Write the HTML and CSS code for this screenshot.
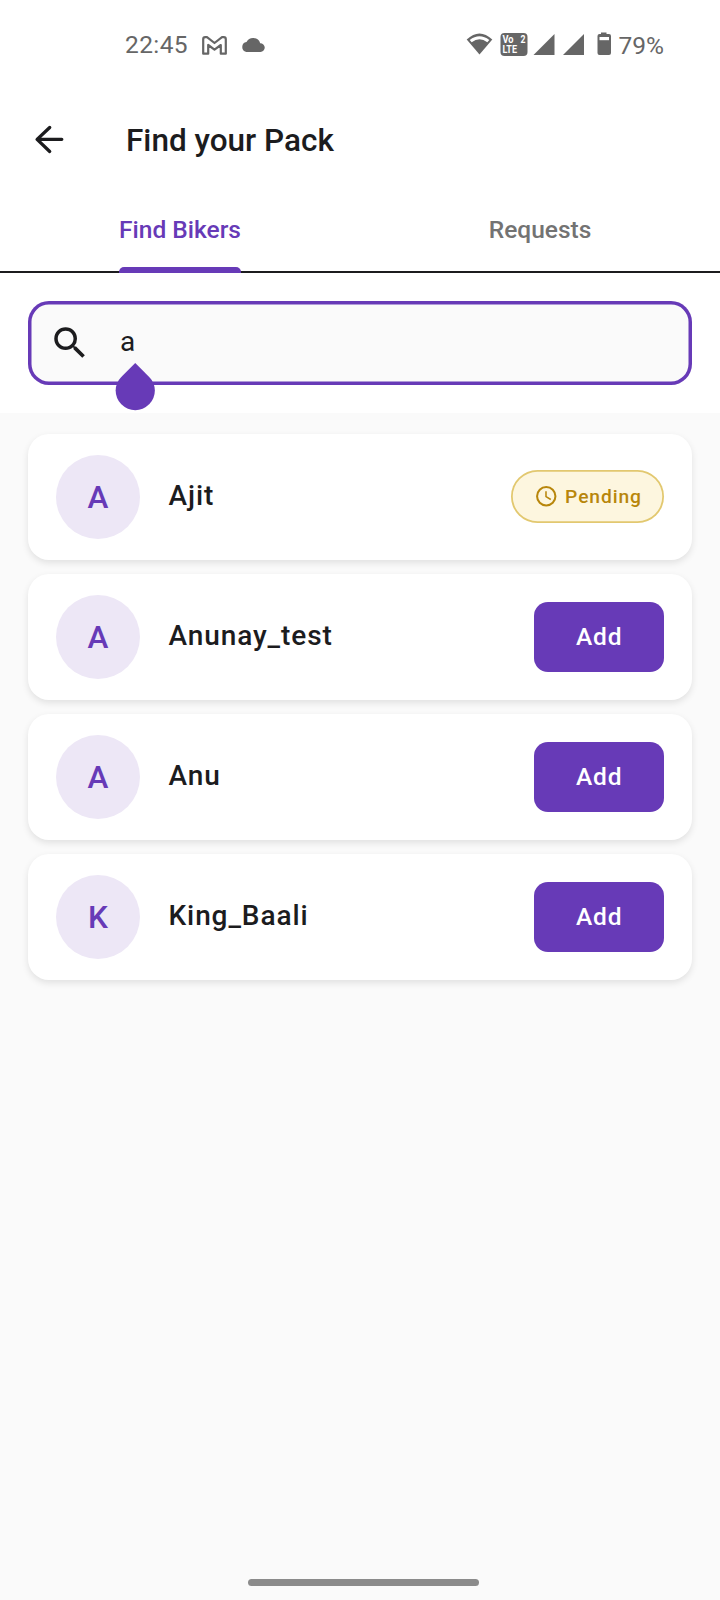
FILE: index.html
```html
<!DOCTYPE html>
<html lang="en">
<head>
<meta charset="utf-8">
<title>Find your Pack</title>
<link rel="stylesheet" href="styles.css">
</head>
<body>
<div class="screen">
  <div class="top">
    <div class="status">
      <span class="time">22:45</span>
      <svg class="gmail" width="25" height="19" viewBox="0 0 25 19"><path d="M1.200 3.200Q1.200 1.200 3.200 1.200H5L12.500 7 20 1.200h1.800Q23.800 1.200 23.800 3.200V17.700H18.800V9L12.500 13.700 6.200 9v8.700H1.200Z" fill="none" stroke="#666" stroke-width="2.200" stroke-linejoin="round"/></svg>
      <svg class="cloud" width="24" height="14" viewBox="0 0 24 14"><path d="M19.200 5.200A7.300 7.300 0 0 0 12 0 7.600 7.600 0 0 0 5.500 4 5.100 5.100 0 0 0 5.200 14H19.500a4.400 4.400 0 0 0-.3-8.800Z" fill="#666"/></svg>
      <span class="spacer"></span>
      <svg class="signals" width="150" height="26" viewBox="0 0 150 26">
        <path d="M.7 7.500Q13.500-4.500 26.300 7.500L13.500 22.500Z" fill="#666"/>
        <path d="M3.700 8Q13.500.5 23.300 8L21.300 10.300Q13.500 4.300 5.700 10.300Z" fill="#fff"/>
        <rect x="34.500" y="1" width="27" height="23" rx="4" fill="#666"/>
        <path d="M88.500 2v21H67.500ZM118 2v21H97Z" fill="#666"/>
        <path d="M135 .5h5.500V2H143q2 0 2 2v17q0 2-2 2h-9.500q-2 0-2-2V4q0-2 2-2H135Z" fill="#666"/>
        <rect x="133.500" y="5" width="9.500" height="3.200" fill="#fff"/>
        <g fill="#fff" font-family="Roboto, sans-serif" font-weight="700" font-size="10"><text x="36.500" y="11" textLength="11" lengthAdjust="spacingAndGlyphs">Vo</text><text x="54.500" y="11" textLength="5" lengthAdjust="spacingAndGlyphs">2</text><text x="36.500" y="21.300" textLength="14.500" lengthAdjust="spacingAndGlyphs">LTE</text></g>
      </svg>
      <span class="percent">79%</span>
    </div>
    <div class="appbar">
      <svg width="42" height="42" viewBox="0 0 24 24"><path d="M19.300 12.200H5.300M12.400 5.400 5.200 12.200l7.200 6.900" fill="none" stroke="#1c1c1e" stroke-width="1.900" stroke-linecap="round" stroke-linejoin="round"/></svg>
      <h1 class="title">Find your Pack</h1>
    </div>
    <div class="tabs">
      <div class="tab tab-active"><span class="tab-label">Find Bikers</span></div>
      <div class="tab"><span class="tab-label">Requests</span></div>
    </div>
    <div class="search">
      <svg width="42" height="42" viewBox="0 0 24 24"><path fill="#1c1c1e" d="M15.500 14h-.79l-.28-.27A6.471 6.471 0 0 0 16 9.500 6.500 6.500 0 1 0 9.500 16c1.610 0 3.090-.59 4.230-1.570l.27.28v.79l5 4.990L20.490 19l-4.990-5zm-6 0C7.010 14 5 11.990 5 9.500S7.010 5 9.500 5 14 7.010 14 9.500 11.990 14 9.500 14z"/></svg>
      <span class="query">a</span>
      <span class="handle"></span>
    </div>
  </div>
  <div class="list">
    <div class="card">
      <div class="avatar">A</div><div class="name">Ajit</div>
      <div class="pending">
        <svg width="24.500" height="24.500" viewBox="0 0 24 24"><g fill="none" stroke="#b8860b"><circle cx="12" cy="12" r="9" stroke-width="2"/><path d="M11.750 7v5.400l4.700 2.800" stroke-width="1.500"/></g></svg>
        <span>Pending</span>
      </div>
    </div>
    <div class="card"><div class="avatar">A</div><div class="name">Anunay_test</div><div class="add">Add</div></div>
    <div class="card"><div class="avatar">A</div><div class="name">Anu</div><div class="add">Add</div></div>
    <div class="card"><div class="avatar">K</div><div class="name">King_Baali</div><div class="add">Add</div></div>
  </div>
  <div class="homebar"></div>
</div>
</body>
</html>
```
FILE: styles.css
```css
* { box-sizing: border-box; }
body { margin: 0; font-family: Roboto, sans-serif; color: #1c1c1e; }
.screen { width: 720px; height: 1600px; background: #fafafa; display: flex; flex-direction: column; }
.top { height: 413px; background: #fff; }
.status { height: 90px; padding: 0 56px 0 125px; display: flex; align-items: center; color: #666; font-size: 24.5px; line-height: 30px; }
.time { letter-spacing: .4px; }
.gmail { margin-left: 14px; }
.cloud { margin-left: 14px; }
.spacer { flex: 1; }
.signals { margin-right: 3px; }
.percent { margin-top: 2px; }
.appbar { height: 98px; padding: 0 28px; display: flex; align-items: center; gap: 56px; }
.title { margin: 3px 0 0; font-size: 31.5px; font-weight: 500; line-height: 42px; }
.tabs { height: 85px; display: flex; border-bottom: 2px solid #1c1c1e; }
.tab { flex: 1; height: 85px; display: flex; justify-content: center; color: #737373; font-size: 24.5px; font-weight: 500; line-height: 84px; }
.tab-label { position: relative; height: 85px; }
.tab-active { color: #673ab7; }
.tab-active .tab-label::after { content: ""; position: absolute; left: 0; right: 0; bottom: 0; height: 6px; background: #673ab7; border-radius: 5px 5px 0 0; }
.search { position: relative; margin: 27.5px 28px 0; height: 84px; box-shadow: inset 0 0 0 3.5px #673ab7; border-radius: 21px; background: #fafafa; display: flex; align-items: center; padding-left: 21px; }
.query { margin: -1px 0 0 29px; font-size: 28px; line-height: 42px; }
.handle { position: absolute; left: 88.2px; top: 70.2px; width: 38.5px; height: 38.5px; background: #673ab7; border-radius: 0 50% 50% 50%; transform: rotate(45deg); }
.list { padding: 20.500px 28px 0; display: flex; flex-direction: column; gap: 14px; }
.card { height: 126px; padding: 0 28px; background: #fff; border-radius: 21px; box-shadow: 0 3px 7px rgba(0,0,0,.1); display: flex; align-items: center; }
.avatar { width: 84px; height: 84px; border-radius: 50%; background: #ede7f6; color: #673ab7; font-size: 31.5px; font-weight: 500; padding-top: 1px; display: flex; align-items: center; justify-content: center; }
.name { flex: 1; margin: -2px 0 0 28.5px; font-size: 28px; font-weight: 500; letter-spacing: .9px; }
.add { width: 130.5px; height: 70px; border-radius: 14px; background: #673ab7; color: #fff; font-size: 24.5px; font-weight: 500; letter-spacing: .9px; padding-left: 1px; display: flex; align-items: center; justify-content: center; }
.pending { width: 153.5px; height: 52.5px; box-shadow: inset 0 0 0 1.75px #e2c870; border-radius: 27px; background: #fdf6df; color: #b8860b; font-size: 19.25px; font-weight: 500; letter-spacing: .9px; padding-left: 1px; display: flex; align-items: center; justify-content: center; gap: 7px; }
.homebar { width: 231px; height: 7px; margin: auto 0 14px 248px; border-radius: 4px; background: #8b8b8b; }
```
